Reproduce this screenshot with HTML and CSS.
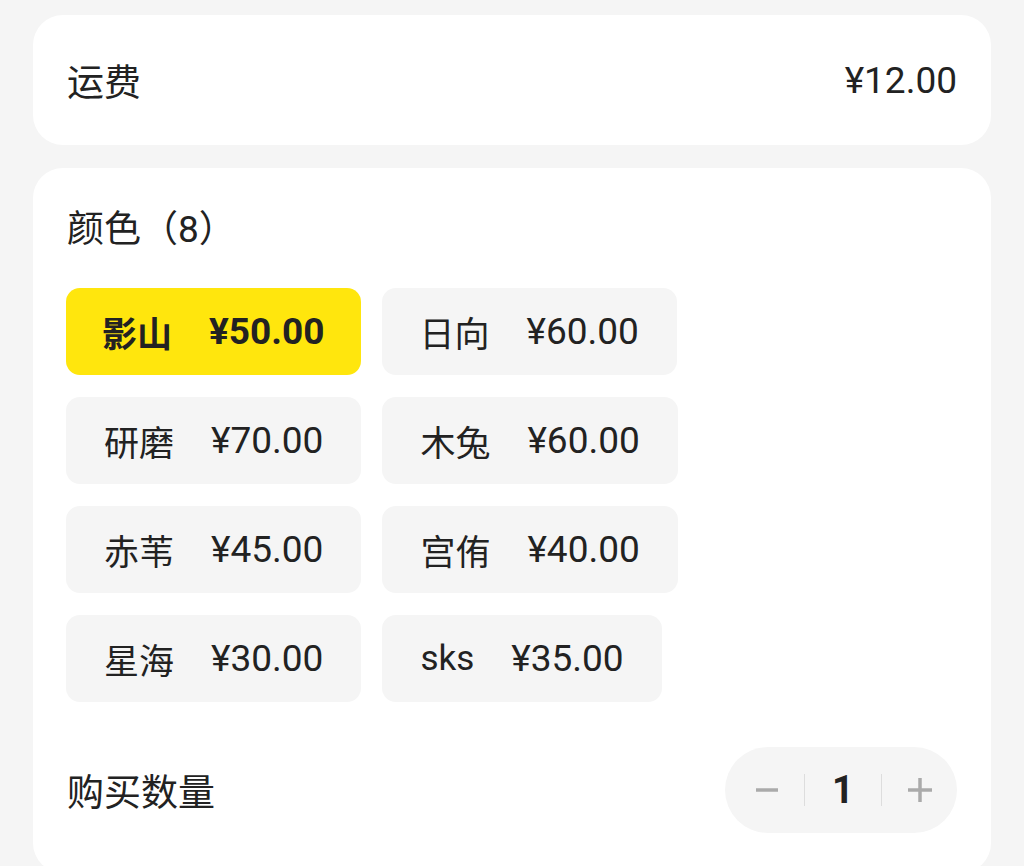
FILE: index.html
```html
<!DOCTYPE html>
<html lang="zh-CN">
<head>
    <meta charset="UTF-8">
    <meta name="viewport" content="width=device-width, initial-scale=1.0">
    <title>商品规格</title>
    <link rel="stylesheet" href="styles.css">
</head>
<body>
    <div class="page">
        <section class="card freight">
            <span class="label">运费</span>
            <span class="amount">¥12.00</span>
        </section>

        <section class="card options">
            <h2 class="options-title">颜色（8）</h2>
            <div class="chips">
                <button type="button" class="chip active"><span class="name">影山</span><span>¥50.00</span></button>
                <button type="button" class="chip"><span class="name">日向</span><span>¥60.00</span></button>
                <button type="button" class="chip"><span class="name">研磨</span><span>¥70.00</span></button>
                <button type="button" class="chip"><span class="name">木兔</span><span>¥60.00</span></button>
                <button type="button" class="chip"><span class="name">赤苇</span><span>¥45.00</span></button>
                <button type="button" class="chip"><span class="name">宫侑</span><span>¥40.00</span></button>
                <button type="button" class="chip"><span class="name">星海</span><span>¥30.00</span></button>
                <button type="button" class="chip"><span class="name">sks</span><span>¥35.00</span></button>
            </div>

            <div class="qty-row">
                <span class="label">购买数量</span>
                <div class="stepper">
                    <button type="button" class="step">
                        <svg width="24" height="24" viewBox="0 0 24 24"><path d="M1 12h22" stroke="#aaa" stroke-width="3.5"/></svg>
                    </button>
                    <span class="qty">1</span>
                    <button type="button" class="step">
                        <svg width="24" height="24" viewBox="0 0 24 24"><path d="M0 12h24M12 0v24" stroke="#aaa" stroke-width="3.5"/></svg>
                    </button>
                </div>
            </div>
        </section>
    </div>
</body>
</html>
```

FILE: styles.css
```css
body {
    margin: 0;
    background-color: #f5f5f5;
    font-family: Roboto, "Noto Sans CJK SC", sans-serif;
    color: #222;
    overflow: hidden;
}
.page {
    padding: 15px 33px 0;
    display: flex;
    flex-direction: column;
    gap: 23px;
}
.card {
    background: #fff;
    border-radius: 30px;
    padding: 0 34px;
}
.freight {
    height: 130px;
    display: flex;
    align-items: center;
    justify-content: space-between;
}
.label {
    font-size: 37px;
}
.amount {
    font-size: 37px;
}
.options {
    padding-top: 26px;
    padding-bottom: 40px;
}
.options-title {
    margin: 0;
    font-size: 37px;
    font-weight: normal;
    line-height: 72px;
}
.chips {
    margin-top: 22px;
    margin-left: -1px;
    display: flex;
    flex-wrap: wrap;
    gap: 22px 21px;
    max-width: 700px;
}
.chip {
    height: 87px;
    padding: 0 38px;
    border: none;
    border-radius: 14px;
    background: #f5f5f5;
    color: #222;
    font-family: inherit;
    font-size: 37px;
    display: flex;
    align-items: center;
    gap: 37px;
}
.chip .name {
    font-size: 35px;
}
.chip.active {
    background: #ffe60d;
    font-weight: bold;
    padding: 0 36px;
}
.qty-row {
    margin-top: 45px;
    display: flex;
    align-items: center;
    justify-content: space-between;
}
.stepper {
    width: 232px;
    height: 86px;
    border-radius: 43px;
    background: #f5f5f5;
    display: flex;
    align-items: center;
}
.step {
    flex: 1;
    height: 32px;
    border: none;
    background: none;
    display: flex;
    align-items: center;
    justify-content: center;
    padding: 0;
}
.step:first-child {
    padding-left: 4px;
}
.qty {
    width: 76px;
    text-align: center;
    font-size: 38px;
    font-weight: bold;
    border-left: 1px solid #ddd;
    border-right: 1px solid #ddd;
    line-height: 32px;
}
```
